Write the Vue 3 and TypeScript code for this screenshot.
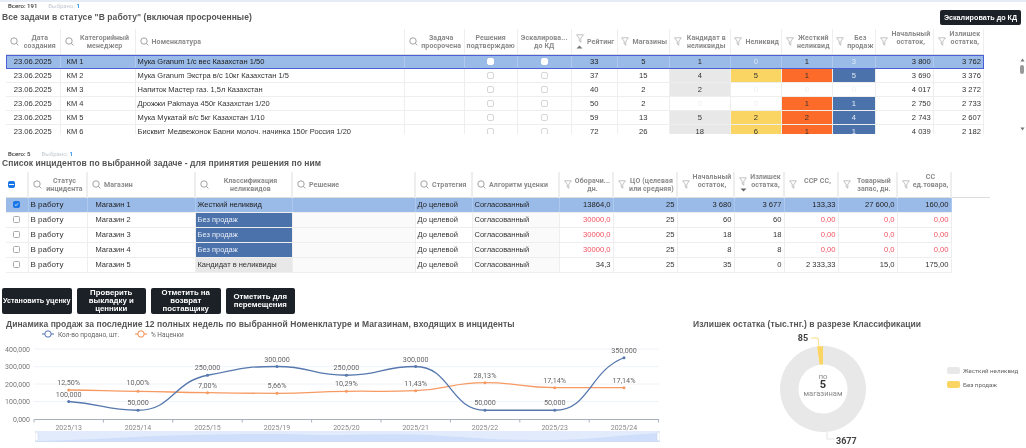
<script setup lang="ts">
type Cell = { v: string; c?: string };
const topCols = [54, 75, 269, 60, 53, 54, 46, 52, 61, 51, 51, 43, 58, 50];
const botCols = [22, 59, 108, 97, 123, 57, 87, 54, 64, 57, 50, 54, 59, 54, 39];

const tint = (v: string, kind: string): Cell => {
  if (v === '0') return { v, c: 'zero' };
  return { v, c: kind };
};
const topRows = [
  { d: '23.06.2025', k: 'КМ 1', n: 'Мука Granum 1/с вес Казахстан 1/50', r: '33', m: '5', vals: ['1', '0', '1', '3'], a: '3 800', b: '3 762', sel: true },
  { d: '23.06.2025', k: 'КМ 2', n: 'Мука Granum Экстра в/с 10кг Казахстан 1/5', r: '37', m: '15', vals: ['4', '5', '1', '5'], a: '3 690', b: '3 376' },
  { d: '23.06.2025', k: 'КМ 3', n: 'Напиток Мастер газ. 1,5л Казахстан', r: '40', m: '2', vals: ['2', '0', '0', '0'], a: '4 017', b: '3 272' },
  { d: '23.06.2025', k: 'КМ 4', n: 'Дрожжи Pakmaya 450г Казахстан 1/20', r: '50', m: '2', vals: ['0', '0', '1', '1'], a: '2 750', b: '2 733' },
  { d: '23.06.2025', k: 'КМ 5', n: 'Мука Мукатай в/с 5кг Казахстан 1/10', r: '59', m: '13', vals: ['5', '2', '2', '4'], a: '2 743', b: '2 607' },
  { d: '23.06.2025', k: 'КМ 6', n: 'Бисквит Медвежонок Барни молоч. начинка 150г Россия 1/20', r: '72', m: '26', vals: ['18', '6', '1', '1'], a: '4 039', b: '2 182' },
];
const kinds = ['gray', 'yellow', 'orange', 'blue'];
const topCells = (vals: string[], sel?: boolean) =>
  vals.map((v, i) => (sel ? { v, c: v === '0' || i === 3 ? 'selw' : '' } : tint(v, kinds[i])));

const topHead = [
  { t: 'Дата создания', i: 's' }, { t: 'Категорийный менеджер', i: 's' }, { t: 'Номенклатура', i: 's', left: true },
  { t: 'Задача просрочена', i: 's' }, { t: 'Решения подтверждаю' }, { t: 'Эскалирова... до КД' },
  { t: 'Рейтинг', i: 'f', sort: 'up' }, { t: 'Магазины', i: 'f' }, { t: 'Кандидат в неликвиды', i: 'f' },
  { t: 'Неликвид', i: 'f' }, { t: 'Жесткий неликвид', i: 'f' }, { t: 'Без продаж', i: 'f' },
  { t: 'Начальный остаток,', i: 'f', high: true }, { t: 'Излишек остатка,', i: 'f', high: true },
];
const botHead = [
  { t: '', i: 'c' }, { t: 'Статус инцидента', i: 's' }, { t: 'Магазин', i: 's', left: true }, { t: 'Классификация неликвидов', i: 's' },
  { t: 'Решение', i: 's', left: true }, { t: 'Стратегия', i: 's', left: true }, { t: 'Алгоритм уценки', i: 's', left: true },
  { t: 'Оборачи... дн.', i: 'f' }, { t: 'ЦО (целевая или средняя)', i: 'f' }, { t: 'Начальный остаток,', i: 'f', high: true },
  { t: 'Излишек остатка,', i: 'f', sort: 'down', high: true }, { t: 'ССР СС,', i: 'f', high: true }, { t: 'Товарный запас, дн.', i: 'f' }, { t: 'СС ед.товара,', i: 'f', high: true },
];
const botRows = [
  { s: 'Магазин 1', k: 'Жесткий неликвид', kc: '', o: '13864,0', ci: '3 680', iz: '3 677', ssr: '133,33', z: '27 600,0', ss: '160,00', sel: true },
  { s: 'Магазин 2', k: 'Без продаж', kc: 'blue', o: '30000,0', ci: '60', iz: '60', ssr: '0,00', z: '0,0', ss: '0,00', red: true },
  { s: 'Магазин 3', k: 'Без продаж', kc: 'blue', o: '30000,0', ci: '18', iz: '18', ssr: '0,00', z: '0,0', ss: '0,00', red: true },
  { s: 'Магазин 4', k: 'Без продаж', kc: 'blue', o: '30000,0', ci: '8', iz: '8', ssr: '0,00', z: '0,0', ss: '0,00', red: true },
  { s: 'Магазин 5', k: 'Кандидат в неликвиды', kc: 'gray', o: '34,3', ci: '35', iz: '0', ssr: '2 333,33', z: '15,0', ss: '175,00' },
];
const actions = ['Установить уценку', 'Проверить выкладку и ценники', 'Отметить на возврат поставщику', 'Отметить для перемещения'];

const xs = [34.7, 104, 173.5, 243, 312.4, 381.7, 451, 520.7, 590];
const blue = [100, 50, 250, 300, 250, 300, 50, 50, 350];
const blueY = blue.map((v) => 104 - v * 0.175);
const orangeY = [75, 76.3, 77.7, 78.3, 76.3, 75.7, 67.7, 72.7, 72.7];
const blueLabels = ['100,000', '50,000', '250,000', '300,000', '250,000', '300,000', '50,000', '50,000', '350,000'];
const orangeLabels = ['12,50%', '10,00%', '7,00%', '5,66%', '10,29%', '11,43%', '28,13%', '17,14%', '17,14%'];
const orangeLabelY = [69.5, 69.5, 72.5, 73.1, 71, 70.5, 62.5, 67.5, 67.5];

function smooth(py: number[]): string {
  const slope = py.map((y, i) => {
    if (i === 0 || i === py.length - 1) return (py[Math.min(i + 1, py.length - 1)] - py[Math.max(i - 1, 0)]) / 69.4 / 2;
    const a = y - py[i - 1];
    const b = py[i + 1] - y;
    if (a * b <= 0) return 0;
    return ((a + b) / 2 / 69.4) * 0.6;
  });
  let d = `M${xs[0]} ${py[0]}`;
  for (let i = 0; i < py.length - 1; i++) {
    const h = (xs[i + 1] - xs[i]) * 0.5;
    d += ` C${xs[i] + h} ${py[i] + slope[i] * h} ${xs[i + 1] - h} ${py[i + 1] - slope[i + 1] * h} ${xs[i + 1]} ${py[i + 1]}`;
  }
  return d;
}
const bluePath = smooth(blueY);
const orangePath = smooth(orangeY);
const grid = [34, 51.7, 69, 86.5, 104];
const yLabels = ['400,000', '300,000', '200,000', '100,000', '0,000'];
const ticks = Array.from({ length: 10 }, (_, i) => i * 69.4);
const cats = ['2025/13', '2025/14', '2025/15', '2025/19', '2025/20', '2025/21', '2025/22', '2025/23', '2025/24'];

function arc(a0: number, a1: number, R: number, r: number, cx: number, cy: number): string {
  const p = (a: number, q: number) => {
    const t = ((a - 90) * Math.PI) / 180;
    return `${(cx + q * Math.cos(t)).toFixed(2)} ${(cy + q * Math.sin(t)).toFixed(2)}`;
  };
  const large = a1 - a0 > 180 ? 1 : 0;
  return `M${p(a0, R)} A${R} ${R} 0 ${large} 1 ${p(a1, R)} L${p(a1, r)} A${r} ${r} 0 ${large} 0 ${p(a0, r)} Z`;
}
const grayArc = arc(0, 352, 43, 24.5, 155, 58);
const yellowArc = arc(352, 360, 43, 24.5, 155, 58);
</script>

<template>
  <div class="page">
    <section class="top">
      <div class="stats"><b>Всего: 191</b><span class="muted">Выбрано: <i>1</i></span></div>
      <div class="titlerow">
        <h2 class="title">Все задачи в статусе "В работу" (включая просроченные)</h2>
        <button class="dark esc">Эскалировать до КД</button>
      </div>
      <div class="tablewrap">
        <div class="clip clip-top">
          <table class="grid grid-top">
            <colgroup><col v-for="(w, i) in topCols" :key="i" :style="{ width: w + 'px' }" /></colgroup>
            <thead>
              <tr>
                <th v-for="h in topHead" :key="h.t">
                  <div class="hc" :class="{ left: h.left }">
                    <span v-if="h.i" class="icons">
                      <svg v-if="h.i === 's'" width="9" height="9" viewBox="0 0 9 9" fill="none" stroke="#8b8b8b" stroke-width=".8"><circle cx="4" cy="4" r="3.2" /><path d="M6.400 6.400 8.400 8.400" /></svg>
                      <svg v-else width="8" height="9" viewBox="0 0 8 9" fill="none" stroke="#a8a8a8" stroke-width=".7"><path d="M.6.8h6.800L4.800 4.200v4L3.200 7V4.200z" /></svg>
                      <svg v-if="h.sort" class="sort" width="7" height="4" viewBox="0 0 7 4"><path d="M3.500.5 6.500 3.500H.5z" fill="#777" /></svg>
                    </span>
                    <span class="ht" :class="{ high: h.high }">{{ h.t }}</span>
                  </div>
                </th>
              </tr>
            </thead>
            <tbody>
              <tr v-for="r in topRows" :key="r.k" :class="{ sel: r.sel }">
                <td class="ctr date">{{ r.d }}</td>
                <td class="km">{{ r.k }}</td>
                <td class="txt">{{ r.n }}</td>
                <td></td>
                <td class="ctr"><span class="check" :class="{ on: r.sel }"></span></td>
                <td class="ctr"><span class="check" :class="{ on: r.sel }"></span></td>
                <td class="ctr">{{ r.r }}</td>
                <td class="ctr">{{ r.m }}</td>
                <td v-for="(c, i) in topCells(r.vals, r.sel)" :key="i" class="ctr" :class="c.c">{{ c.v }}</td>
                <td class="num">{{ r.a }}</td>
                <td class="num">{{ r.b }}</td>
              </tr>
            </tbody>
          </table>
        </div>
        <div class="scroll">
          <svg width="5" height="4" viewBox="0 0 5 4"><path d="M2.500.5 4.500 3.500H.5z" fill="#777" /></svg>
          <span class="thumb"></span>
          <svg class="down" width="5" height="4" viewBox="0 0 5 4"><path d="M2.500 3.500 4.500.5H.5z" fill="#777" /></svg>
        </div>
      </div>
    </section>

    <section class="mid">
      <div class="stats"><b>Всего: 5</b><span class="muted">Выбрано: <i>1</i></span></div>
      <h2 class="title midtitle">Список инцидентов по выбранной задаче - для принятия решения по ним</h2>
      <table class="grid grid-bot">
        <colgroup><col v-for="(w, i) in botCols" :key="i" :style="{ width: w + 'px' }" /></colgroup>
        <thead>
          <tr>
            <th v-for="h in botHead" :key="h.t">
              <div class="hc" :class="{ left: h.left }">
                <span v-if="h.i === 'c'" class="tick head"></span>
                <span v-else class="icons">
                  <svg v-if="h.i === 's'" width="9" height="9" viewBox="0 0 9 9" fill="none" stroke="#8b8b8b" stroke-width=".8"><circle cx="4" cy="4" r="3.2" /><path d="M6.400 6.400 8.400 8.400" /></svg>
                  <svg v-else width="8" height="9" viewBox="0 0 8 9" fill="none" stroke="#a8a8a8" stroke-width=".7"><path d="M.6.8h6.800L4.800 4.200v4L3.200 7V4.200z" /></svg>
                  <svg v-if="h.sort" class="sort" width="7" height="4" viewBox="0 0 7 4"><path d="M3.500 3.500 6.500.5H.5z" fill="#666" /></svg>
                </span>
                <span class="ht" :class="{ high: h.high }">{{ h.t }}</span>
              </div>
            </th>
            <th class="filler"></th>
          </tr>
        </thead>
        <tbody>
          <tr v-for="r in botRows" :key="r.s" :class="{ sel2: r.sel }">
            <td class="ctr"><span class="tick" :class="{ checked: r.sel }">
              <svg v-if="r.sel" width="7" height="7" viewBox="0 0 7 7" fill="none" stroke="#fff" stroke-width="1.1"><path d="M1.200 3.600 2.900 5.200 5.800 1.800" /></svg>
            </span></td>
            <td class="txt status">В работу</td>
            <td class="shop">{{ r.s }}</td>
            <td class="txt" :class="r.kc">{{ r.k }}</td>
            <td class="soft"></td>
            <td class="txt">До целевой</td>
            <td class="txt soft">Согласованный</td>
            <td class="num" :class="{ red: r.red }">{{ r.o }}</td>
            <td class="num">25</td>
            <td class="num">{{ r.ci }}</td>
            <td class="num">{{ r.iz }}</td>
            <td class="num" :class="{ red: r.red }">{{ r.ssr }}</td>
            <td class="num" :class="{ red: r.red }">{{ r.z }}</td>
            <td class="num" :class="{ red: r.red }">{{ r.ss }}</td>
          </tr>
        </tbody>
      </table>
      <div class="actions">
        <button v-for="a in actions" :key="a" class="dark act">{{ a }}</button>
      </div>
    </section>

    <section class="bottom">
      <div class="linepanel">
        <h2 class="title charttitle">Динамика продаж за последние 12 полных недель по выбранной Номенклатуре и Магазинам, входящих в инциденты</h2>
        <svg class="linechart" width="665" height="101" viewBox="0 0 665 101">
          <g font-family="Roboto, sans-serif" font-size="6.500" fill="#666">
            <path d="M42 4h12" stroke="#4c72ab" stroke-width="1" />
            <circle cx="48" cy="4" r="3.2" fill="#fff" stroke="#4c72ab" stroke-width="1" />
            <text x="58" y="6.500">Кол-во продано, шт.</text>
            <path d="M135 4h12" stroke="#f58a4b" stroke-width="1" />
            <circle cx="141" cy="4" r="3.200" fill="#fff" stroke="#f58a4b" stroke-width="1" />
            <text x="151" y="6.500">% Наценки</text>
          </g>
          <g transform="translate(34,-15)">
            <path v-for="(g, i) in grid.slice(0, 4)" :key="i" :d="`M0 ${g}H625`" stroke="#eef2f9" stroke-width="1" />
            <path d="M0 104.500H625" stroke="#a8b0bd" stroke-width="1" />
            <path v-for="t in ticks" :key="t" :d="`M${t} 104.500v3`" stroke="#a8b0bd" stroke-width="1" />
            <path :d="orangePath" fill="none" stroke="#f79a62" stroke-width="1.300" />
            <path :d="bluePath" fill="none" stroke="#5678ae" stroke-width="1.300" />
            <circle v-for="(y, i) in orangeY" :key="'o' + i" :cx="xs[i]" :cy="y" r="1.500" fill="#f79a62" />
            <circle v-for="(y, i) in blueY" :key="'b' + i" :cx="xs[i]" :cy="y" r="1.500" fill="#5678ae" />
            <g font-family="Roboto, sans-serif" font-size="7.200" fill="#666" text-anchor="middle">
              <text v-for="(l, i) in blueLabels" :key="'bl' + i" :x="xs[i]" :y="blueY[i] - 5">{{ l }}</text>
              <text v-for="(l, i) in orangeLabels" :key="'ol' + i" :x="xs[i]" :y="orangeLabelY[i]">{{ l }}</text>
            </g>
            <g font-family="Roboto, sans-serif" font-size="7" fill="#888" text-anchor="middle">
              <text v-for="(c, i) in cats" :key="c" :x="xs[i]" y="114.500">{{ c }}</text>
            </g>
          </g>
          <g transform="translate(0,-15)" font-family="Roboto, sans-serif" font-size="7" fill="#777" text-anchor="end">
            <text v-for="(l, i) in yLabels" :key="l" x="30" :y="grid[i] + 2.500">{{ l }}</text>
          </g>
        </svg>
        <div class="zoomer">
          <svg width="625" height="11" viewBox="0 0 625 11" preserveAspectRatio="none">
            <path d="M0 10C60 9 90 5 180 3.500S260 4 300 4 360 2 410 5 460 9 510 9 580 4 625 2V11H0Z" fill="#cfdefa" />
            <rect x="0" y="1" width="3" height="9" rx="1.500" fill="#fff" stroke="#ccd6e6" stroke-width=".6" />
            <rect x="622" y="1" width="3" height="9" rx="1.500" fill="#fff" stroke="#ccd6e6" stroke-width=".6" />
          </svg>
        </div>
      </div>
      <div class="donutpanel">
        <h2 class="title donuttitle">Излишек остатка (тыс.тнг.) в разрезе Классификации</h2>
        <svg width="358" height="117" viewBox="0 0 358 117">
          <path :d="grayArc" fill="#e8e8e8" />
          <path :d="yellowArc" fill="#fad564" />
          <path d="M143 7h7l1 9" fill="none" stroke="#fad564" stroke-width=".8" />
          <path d="M159 101v7h8" fill="none" stroke="#ddd" stroke-width=".8" />
          <g font-family="Roboto, sans-serif" text-anchor="middle">
            <text x="155" y="47.500" font-size="7.500" fill="#888">по</text>
            <text x="155" y="57" font-size="11" font-weight="700" fill="#333">5</text>
            <text x="155" y="65" font-size="7.500" fill="#888">магазинам</text>
          </g>
          <g font-family="Roboto, sans-serif" font-size="9" font-weight="700" fill="#444">
            <text x="135" y="10" text-anchor="middle">85</text>
            <text x="168" y="112.500">3677</text>
          </g>
          <g font-family="Roboto, sans-serif" font-size="6.200" fill="#666">
            <rect x="279" y="36" width="13" height="7" rx="2" fill="#e8e8e8" />
            <text x="295" y="42">Жесткий неликвид</text>
            <rect x="279" y="50" width="13" height="7" rx="2" fill="#fad564" />
            <text x="295" y="56">Без продаж</text>
          </g>
        </svg>
      </div>
    </section>
  </div>
</template>

<style scoped>
.page {
  width: 1026px;
  height: 448px;
  overflow: hidden;
  box-sizing: border-box;
  border-top: 2px solid #e6ecf6;
  font-family: "Liberation Sans", Arial, sans-serif;
  color: #333;
  background: #fff;
  filter: blur(.3px);
}
.top { height: 146px; }
.stats {
  display: flex;
  gap: 11px;
  padding: 0 0 0 8px;
  height: 8px;
  line-height: 8px;
  font-size: 6px;
  font-family: Roboto, sans-serif;
}
.stats b { font-weight: 500; color: #333; }
.muted { color: #c4c9d0; }
.muted i { font-style: normal; color: #2e95e8; font-weight: 700; }
.titlerow {
  display: flex;
  justify-content: space-between;
  align-items: flex-start;
  padding-right: 5px;
  height: 19px;
}
.title {
  margin: 0;
  font-size: 8.5px;
  line-height: 12px;
  font-weight: 700;
  color: #555;
  letter-spacing: .07px;
  white-space: nowrap;
}
.titlerow .title { padding: 0 0 0 2px; margin-top: 1px; }
.dark {
  background: #1c2127;
  color: #fff;
  border: 0;
  border-radius: 2px;
  font-family: "Liberation Sans", Arial, sans-serif;
  font-weight: 700;
  font-size: 7.200px;
  line-height: 8px;
  padding: 0;
  text-align: center;
}
.esc { width: 81px; height: 15px; margin-top: 0; }
.tablewrap {
  display: flex;
  padding-left: 6px;
}
.clip { overflow: hidden; }
.clip-top { height: 105px; width: 978px; }
.grid {
  table-layout: fixed;
  border-collapse: collapse;
  font-size: 8px;
}
.grid-top { width: 978px; }
.grid th {
  height: 25px;
  padding: 0;
  border-right: 1px solid #eee;
  border-bottom: 1px solid #ddd;
  font-weight: 700;
  color: #8a8a8a;
  font-size: 7px;
  line-height: 8px;
  font-family: Roboto, sans-serif;
}
.hc {
  display: flex;
  align-items: center;
  justify-content: center;
  gap: 3px;
  padding: 0 2px;
  height: 25px;
}
.hc.left { justify-content: flex-start; }
.icons {
  display: flex;
  flex-direction: column;
  align-items: center;
  gap: 2px;
  flex: none;
  padding-left: 2px;
}
.ht { flex: 1; text-align: center; letter-spacing: .1px; }
.hc.left .ht { flex: none; text-align: left; }
.ht.high { margin-top: -7px; }
.grid td {
  height: 13px;
  padding: 0 2px;
  border-right: 1px solid #eee;
  border-bottom: 1px solid #eee;
  font-size: 7.600px;
  line-height: 13px;
  white-space: nowrap;
  overflow: hidden;
}
.grid td.txt { font-size: 7.500px; }
.ctr { text-align: center; }
.num { text-align: right; }
.km { padding-left: 6px !important; font-size: 7.500px !important; }
.txt { text-align: left; }
.grid td.status { font-size: 8px; }
.gray { background: #e8e8e8; }
.yellow { background: #fad564; }
.orange { background: #fd6b2b; }
.blue { background: #4c72ab; color: #e6ecf6; }
.zero { color: #eee; }
.sel td { background: #9abbe8; border-right-color: #aec9ee; color: #222; }
.sel td.selw { color: #dfe9f8; }
.sel { outline: 1px solid #4a5fd8; outline-offset: -1px; }
.sel2 td { background: #9abbe8; border-right-color: #aec9ee; color: #222; }
.check {
  display: inline-block;
  box-sizing: border-box;
  width: 7px;
  height: 7px;
  border: 1px solid #d6d6d6;
  border-radius: 2px;
  background: #fff;
  vertical-align: -1px;
}
.check.on { border-color: #fff; }
.scroll {
  width: 4px;
  margin-left: 36px;
  height: 73px;
  display: flex;
  flex-direction: column;
  align-items: center;
  margin-top: 29px;
}
.thumb { width: 4px; height: 9px; background: #999; border-radius: 2px; margin-top: 3px; }
.down { margin-top: auto; }
.mid { height: 170px; }
.midtitle { padding-left: 2px; margin-top: 0; height: 15px; }
.mid .stats { padding-top: 2px; height: 7px; line-height: 7px; }
.grid-bot { width: 984px; margin-left: 6px; }
.grid-bot td { height: 14px; line-height: 14px; }
.grid-bot th { border-right: 2px solid #eee; border-bottom: 1px solid #ddd; }
.grid-bot th.filler { border-right: 0; }
.shop { padding-left: 8px !important; font-size: 7.500px !important; }
.soft { background: #fafafa; }
.sel2 .soft { background: #9abbe8; }
.red { color: #f0505e; }
.tick {
  display: inline-flex;
  align-items: center;
  justify-content: center;
  box-sizing: border-box;
  width: 7px;
  height: 7px;
  border: 1px solid #aaa;
  border-radius: 1.500px;
  background: #fff;
  vertical-align: -1px;
}
.tick.checked { background: #1976e6; border-color: #1976e6; }
.tick.head { background: #1976e6; border-color: #1976e6; }
.tick.head::after { content: ""; width: 5px; height: 1px; background: #fff; }
.actions {
  display: flex;
  gap: 5px;
  padding: 15px 0 0 2px;
}
.act { width: 69.500px; height: 26px; font-size: 7.800px; }
.act:first-child { white-space: nowrap; font-size: 7.200px; }
.bottom { display: flex; }
.linepanel { width: 668px; flex: none; }
.charttitle { padding-left: 6px; height: 12px; }
.linechart { display: block; overflow: visible; }
.zoomer {
  margin-left: 35px;
  width: 625px;
  height: 11px;
  background: #e2ebfb;
}
.zoomer svg { display: block; }
.donutpanel { flex: 1; }
.donuttitle { height: 13px; padding-left: 25px; }
.donutpanel svg { display: block; overflow: visible; }
</style>
